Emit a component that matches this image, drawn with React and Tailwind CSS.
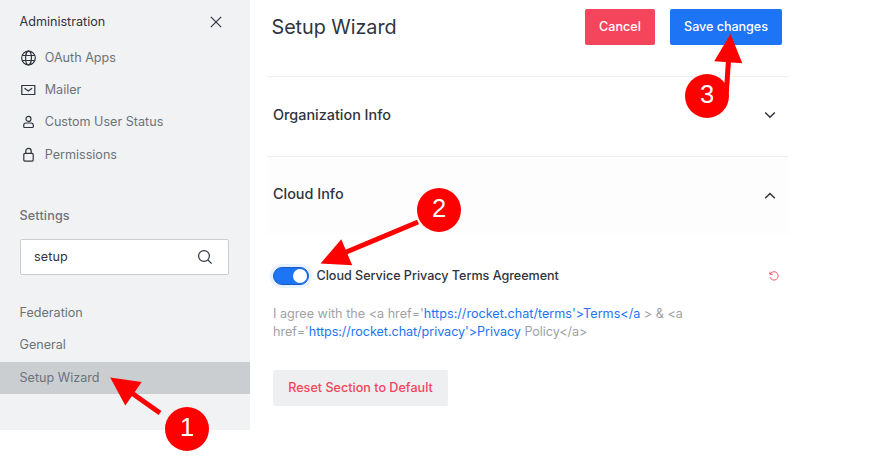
const NAV = [
  { label: "OAuth Apps", icon: GlobeIcon, row: "h-8" },
  { label: "Mailer", icon: MailIcon, row: "h-8" },
  { label: "Custom User Status", icon: UserIcon, row: "h-8" },
  { label: "Permissions", icon: LockIcon, row: "h-[34px]" },
];

function Icon({ children, className = "" }) {
  return (
    <svg width="16" height="16" viewBox="0 0 16 16" fill="none" stroke="currentColor" strokeWidth="1.2" className={className}>
      {children}
    </svg>
  );
}

function GlobeIcon() {
  return (
    <Icon>
      <circle cx="8.5" cy="8" r="6.8" />
      <ellipse cx="8.5" cy="8" rx="2.9" ry="6.8" />
      <path d="M2.200 5.500h12.600M2.200 10.500h12.600" />
    </Icon>
  );
}

function MailIcon() {
  return (
    <Icon>
      <path d="M1.8 3.500h13v9h-13z" />
      <path d="M4.500 6.200 8.300 9l3.800-2.800" />
    </Icon>
  );
}

function UserIcon() {
  return (
    <Icon>
      <circle cx="8.500" cy="4.900" r="2.500" />
      <path d="M6 9h5c1.300 0 2.300 1 2.300 2.300v1.200c0 .6-.4 1-1 1H4.700c-.6 0-1-.4-1-1v-1.200C3.700 10 4.700 9 6 9Z" />
    </Icon>
  );
}

function LockIcon() {
  return (
    <Icon>
      <rect x="3.800" y="6.400" width="9.400" height="7.700" rx="1" />
      <path d="M5.800 6.400V4c0-1.600 1.100-2.700 2.700-2.700s2.700 1.100 2.700 2.700v2.400" />
    </Icon>
  );
}

function Sidebar() {
  return (
    <aside className="flex h-[430px] w-[250px] shrink-0 flex-col bg-[#f1f2f4] text-[12.6px] text-[#6c727a]">
      <header className="flex h-[41px] items-center justify-between pl-[19.500px] pr-[28px] pt-[3px] text-[#2f343d]">
        <span>Administration</span>
        <svg width="12" height="12" viewBox="0 0 12 12" fill="none" stroke="currentColor" strokeWidth="1.2">
          <path d="m.8.8 10.400 10.400M11.200.8.8 11.200" />
        </svg>
      </header>
      <nav className="flex flex-col">
        {NAV.map(({ label, icon: Glyph, row }) => (
          <a key={label} className={`flex items-center gap-[8.700px] pl-5 pt-[2px] ${row}`}>
            <span className="text-[#2f343d]"><Glyph /></span>
            <span>{label}</span>
          </a>
        ))}
      </nav>
      <h2 className="mt-[35px] h-[20px] pl-[19.500px] font-medium leading-[20px] tracking-[0.15px]">Settings</h2>
      <div className="ml-5 mt-[13px] flex h-[36px] w-[209px] items-center justify-between rounded-[2px] border border-[#cbced1] bg-white pl-[13px] pr-[15px] text-[#2f343d]">
        <span className="tracking-[0.1px]">setup</span>
        <Icon>
          <circle cx="7" cy="7" r="5.400" />
          <path d="m10.900 10.900 3.700 3.700" />
        </Icon>
      </div>
      <nav className="mt-[22px] flex flex-col">
        <a className="flex h-8 items-center pl-[19.500px]">Federation</a>
        <a className="flex h-[33px] items-center pb-px pl-[19.500px]">General</a>
        <a className="flex h-8 items-center bg-[#cbced1] pl-[19.500px]">Setup Wizard</a>
      </nav>
    </aside>
  );
}

function Chevron({ up = false }) {
  return (
    <svg className={up ? "" : "-mt-[3px]"} width="12" height="8" viewBox="0 0 12 8" fill="none" stroke="#2f343d" strokeWidth="1.500">
      <path d={up ? "M1.200 6.300 6 1.500l4.800 4.800" : "M1.200 1.500 6 6.300l4.800-4.800"} />
    </svg>
  );
}

function Content() {
  return (
    <main className="ml-[17px] w-[521px] text-[12.6px] text-[#2f343d]">
      <header className="flex h-[76px] items-start justify-between pl-[4.500px] pr-[6px] pt-[9px]">
        <h1 className="text-[19.8px] leading-[36px] tracking-[-0.05px]">Setup Wizard</h1>
        <div className="flex gap-[15px] font-medium text-white">
          <button className="h-[36px] w-[70px] rounded-[2px] bg-[#f5455c]">Cancel</button>
          <button className="h-[36px] w-[112px] rounded-[2px] bg-[#1d74f5] tracking-[-0.05px]">Save changes</button>
        </div>
      </header>
      <section className="flex h-[80px] items-center justify-between border-t border-[#eeeff1] pl-[6px] pr-[12px]">
        <h2 className="pb-[3px] text-[14.4px] font-medium">Organization Info</h2>
        <Chevron />
      </section>
      <section>
        <div className="flex h-[78px] items-center justify-between border-t border-[#eeeff1] bg-[#fdfdfd] pl-[6px] pr-[12px]">
          <h2 className="pb-[4px] text-[14.4px] font-medium">Cloud Info</h2>
          <Chevron up />
        </div>
        <div className="flex flex-col pl-[6px] pt-[33px]">
          <div className="flex h-[18px] items-center pr-[9px]">
            <span className="flex h-[18px] w-[36px] items-center justify-end rounded-full border border-[#175cc4] bg-[#1d74f5] pr-px ring-[3px] ring-[#e8f2ff]">
              <span className="size-[14px] rounded-full bg-white" />
            </span>
            <span className="ml-[7.500px] font-medium tracking-[-0.03px]">Cloud Service Privacy Terms Agreement</span>
            <svg className="ml-auto" width="10" height="10" viewBox="0 0 10 10" fill="none" stroke="#f5455c" strokeWidth=".9">
              <path d="M1.200 3A4.200 4.200 0 1 1 .9 6M.9.700v2.700h2.700" />
            </svg>
          </div>
          <p className="mt-[20px] whitespace-nowrap leading-[18px] text-[#9ea2a8]">
            <span className="tracking-[0.015px]">
              I agree with the &lt;a href='<a className="text-[#1d74f5]">https://rocket.chat/terms'&gt;Terms&lt;/a</a> &gt; &amp; &lt;a
            </span>
            <br />
            <span className="tracking-[-0.05px]">
              href='<a className="text-[#1d74f5]">https://rocket.chat/privacy'&gt;Privacy</a> Policy&lt;/a&gt;
            </span>
          </p>
          <button className="mt-[29px] h-[36px] w-[175px] rounded-[2px] bg-[#eeeff1] font-medium text-[#f5455c]">
            Reset Section to Default
          </button>
        </div>
      </section>
    </main>
  );
}

const MARKERS = [
  { n: "1", x: 187, y: 429, head: "110.200,377.500 141.700,382 125.300,405.500", line: [131, 392.500, 160, 413] },
  { n: "2", x: 439, y: 210, head: "320.500,263.500 341.300,239.300 352.200,265.200", line: [344, 253, 418, 222] },
  { n: "3", x: 707, y: 96, head: "730.500,34 742.300,63.300 714.200,61.300", line: [728.500, 60, 726.300, 93] },
];

function Annotations() {
  return (
    <svg className="pointer-events-none absolute left-0 top-0" width="884" height="467" viewBox="0 0 884 467">
      {MARKERS.map(({ n, x, y, head, line: [x1, y1, x2, y2] }) => (
        <g key={n} fill="#f00">
          <circle cx={x} cy={y} r="22" />
          <line x1={x1} y1={y1} x2={x2} y2={y2} stroke="#f00" strokeWidth="5" />
          <polygon points={head} />
          <text x={x} y={y + 7} textAnchor="middle" fill="#fff" fontSize="25.500" fontFamily="'Liberation Sans', sans-serif">{n}</text>
        </g>
      ))}
    </svg>
  );
}

export default function App() {
  return (
    <div className="relative flex h-[467px] w-[884px] items-start overflow-hidden bg-white font-[Inter,sans-serif]">
      <Sidebar />
      <Content />
      <Annotations />
    </div>
  );
}
